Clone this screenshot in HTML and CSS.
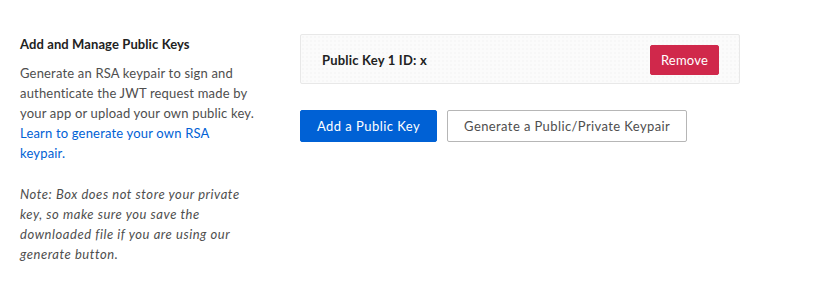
FILE: index.html
```html
<!DOCTYPE html>
<html lang="en">
<head>
<meta charset="utf-8">
<title>Add and Manage Public Keys</title>
<link rel="stylesheet" href="styles.css">
</head>
<body>
<div class="section">
  <div class="info">
    <h3 class="title">Add and Manage Public Keys</h3>
    <p class="desc">Generate an RSA keypair to sign and authenticate the JWT request made by your app or upload your own public key. <a class="link" href="#">Learn to generate your own RSA keypair.</a></p>
    <p class="note">Note: Box does not store your private key, so make sure you save the downloaded file if you are using our generate button.</p>
  </div>
  <div class="content">
    <div class="key-card">
      <span class="key-label">Public Key 1 ID: x</span>
      <button class="btn btn-danger" type="button">Remove</button>
    </div>
    <div class="actions">
      <button class="btn btn-primary" type="button">Add a Public Key</button>
      <button class="btn btn-secondary" type="button">Generate a Public/Private Keypair</button>
    </div>
  </div>
</div>
</body>
</html>
```
FILE: styles.css
```css
html, body {
  margin: 0;
  padding: 0;
  background: #ffffff;
}
body {
  font-family: Lato, "Noto Sans", sans-serif;
  font-size: 13px;
  line-height: 20px;
  color: #4e4e4e;
}
.section {
  display: flex;
  gap: 44px;
  padding: 34px 20px 20px 20px;
}
.info {
  width: 236px;
  flex: none;
}
.title {
  margin: 0 0 9px 0;
  font-size: 13px;
  line-height: 20px;
  font-weight: 700;
  color: #222222;
  letter-spacing: 0.1px;
}
.desc {
  margin: 0 0 21px 0;
  letter-spacing: 0.18px;
}
.link {
  color: #0061d5;
  text-decoration: none;
}
.note {
  margin: 0;
  font-style: italic;
  letter-spacing: 0.55px;
}
.content {
  width: 440px;
  flex: none;
}
.key-card {
  display: flex;
  align-items: center;
  justify-content: space-between;
  padding: 10px 20px 8px 21px;
  border: 1px solid #e8e8e8;
  border-radius: 2px;
  background-color: #fbfbfb;
  background-image: radial-gradient(#f1f1f1 0.6px, transparent 0.8px);
  background-size: 4px 4px;
}
.key-label {
  font-weight: 700;
  color: #222222;
  letter-spacing: 0.2px;
}
.actions {
  display: flex;
  gap: 10px;
  margin-top: 26px;
}
.btn {
  font-family: Lato, "Noto Sans", sans-serif;
  font-size: 13px;
  line-height: 20px;
  height: 32px;
  padding: 0 16px;
  border: 1px solid transparent;
  border-radius: 2px;
  cursor: pointer;
  letter-spacing: 0.4px;
}
.btn-danger {
  height: 30px;
  padding: 0 10px;
  letter-spacing: 0.2px;
  background: #d0284b;
  border-color: #d0284b;
  color: #ffffff;
}
.btn-primary {
  letter-spacing: 0.45px;
  background: #0061d5;
  border-color: #0061d5;
  color: #ffffff;
}
.btn-secondary {
  background: #ffffff;
  border-color: #b6b6b6;
  color: #4e4e4e;
}
```
